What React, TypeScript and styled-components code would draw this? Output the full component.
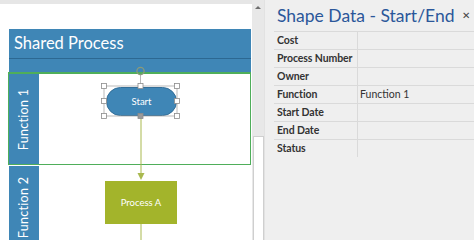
import { Fragment } from 'react'
import styled, { createGlobalStyle } from 'styled-components'

const GlobalStyle = createGlobalStyle`
  html, body {
    margin: 0;
    padding: 0;
    background: #ffffff;
    overflow: hidden;
  }
  body {
    font-family: Lato, 'Open Sans', sans-serif;
  }
`

const Window = styled.div`
  display: flex;
  width: 474px;
  height: 240px;
  overflow: hidden;
`

const Canvas = styled.div`
  width: 252px;
  flex-shrink: 0;
  display: flex;
  flex-direction: column;
  background: #ffffff;
  border-top: 4px solid #e6e6e6;
  box-sizing: border-box;
`

const Diagram = styled.div`
  position: relative;
  margin: 25px 1px 0 9px;
  display: flex;
  flex-direction: column;
`

const PoolTitle = styled.div`
  height: 29px;
  background: #3f86b6;
  color: #ffffff;
  font-size: 16.5px;
  line-height: 29px;
  padding-left: 5px;
  border-bottom: 1px solid #2c6892;
`

const PoolBand = styled.div`
  height: 13px;
  background: #3f86b6;
`

interface LaneProps {
  $height: number
  $selected?: boolean
}

const Lane = styled.div<LaneProps>`
  position: relative;
  display: flex;
  height: ${({ $height }) => $height}px;
  box-sizing: border-box;
  border: 1px solid ${({ $selected }) => ($selected ? '#4fae5a' : 'transparent')};
  border-top-width: ${({ $selected }) => ($selected ? '2px' : '1px')};
  margin-left: -1px;
`

const LaneLabel = styled.div`
  width: 30px;
  flex-shrink: 0;
  background: #3f86b6;
  color: #ffffff;
  display: flex;
  align-items: center;
  justify-content: center;
  overflow: hidden;
`

const LaneText = styled.span`
  display: block;
  transform: rotate(-90deg);
  white-space: nowrap;
  font-size: 12.5px;
  letter-spacing: 0.3px;
`

const LaneBody = styled.div`
  flex: 1;
`

interface ShapeProps {
  $x: number
  $y: number
  $w: number
  $h: number
}

const Terminator = styled.div<ShapeProps>`
  position: absolute;
  left: ${({ $x }) => $x}px;
  top: ${({ $y }) => $y}px;
  width: ${({ $w }) => $w}px;
  height: ${({ $h }) => $h}px;
  box-sizing: border-box;
  border-radius: 15px;
  background: #3f86b6;
  border: 1px solid #336f99;
  color: #ffffff;
  font-size: 9.5px;
  display: flex;
  align-items: center;
  justify-content: center;
  z-index: 2;
`

const ProcessBox = styled(Terminator)`
  border-radius: 0;
  background: #a3b42b;
  border-color: #a3b42b;
`

const Overlay = styled.svg`
  position: absolute;
  left: 0;
  top: 0;
  z-index: 3;
  pointer-events: none;
  overflow: visible;
`

const ScrollTrack = styled.div`
  width: 12px;
  flex-shrink: 0;
  background: #e8e8e8;
  display: flex;
  flex-direction: column;
  align-items: center;
`

const ScrollArrow = styled.div`
  margin-top: 6px;
  width: 0;
  height: 0;
  border-left: 3px solid transparent;
  border-right: 3px solid transparent;
  border-bottom: 3px solid #6e6e6e;
`

const ScrollThumb = styled.div`
  margin-top: 127px;
  width: 11px;
  flex: 1;
  box-sizing: border-box;
  background: #ffffff;
  border: 1px solid #cfcfcf;
  border-bottom: none;
`

const Panel = styled.div`
  flex: 1;
  min-width: 0;
  background: #efefef;
  border-left: 1px solid #e2e2e2;
  display: flex;
  flex-direction: column;
  padding-left: 9px;
`

const PanelHeader = styled.div`
  display: flex;
  align-items: center;
  justify-content: space-between;
  height: 31px;
  padding-left: 3px;
  padding-right: 4px;
`

const PanelTitle = styled.h1`
  margin: 0;
  font-size: 17.5px;
  font-weight: 400;
  color: #2b579a;
  white-space: nowrap;
`

const CloseButton = styled.span`
  font-size: 10px;
  color: #444444;
  margin-top: -2px;
`

const Table = styled.div`
  display: grid;
  grid-template-columns: 84px 1fr;
`

const Cell = styled.div`
  height: 18px;
  box-sizing: border-box;
  border-top: 1px solid #dadada;
  font-size: 10.5px;
  line-height: 17px;
  color: #333333;
  white-space: nowrap;
`

const LabelCell = styled(Cell)`
  font-weight: 700;
  padding-left: 3px;
  border-right: 1px solid #dadada;
  letter-spacing: -0.1px;
`

const ValueCell = styled(Cell)`
  padding-left: 2px;
`

const fields: [string, string][] = [
  ['Cost', ''],
  ['Process Number', ''],
  ['Owner', ''],
  ['Function', 'Function 1'],
  ['Start Date', ''],
  ['End Date', ''],
  ['Status', ''],
]

function Handle({ x, y, filled }: { x: number; y: number; filled?: boolean }) {
  return (
    <rect
      x={x - 2.5}
      y={y - 2.5}
      width={5}
      height={5}
      fill={filled ? '#9a9a9a' : '#ffffff'}
      stroke="#8c8c8c"
      strokeWidth={0.8}
    />
  )
}

export default function App() {
  // selection frame in diagram coords (origin = top-left of pool)
  const sx1 = 95
  const sx2 = 168
  const sy1 = 57
  const sy2 = 87
  const mx = (sx1 + sx2) / 2
  const my = (sy1 + sy2) / 2
  return (
    <>
      <GlobalStyle />
      <Window>
        <Canvas>
          <Diagram>
            <PoolTitle>Shared Process</PoolTitle>
            <PoolBand />
            <Lane $height={93} $selected>
              <LaneLabel>
                <LaneText>Function 1</LaneText>
              </LaneLabel>
              <LaneBody />
            </Lane>
            <Lane $height={84}>
              <LaneLabel>
                <LaneText>Function 2</LaneText>
              </LaneLabel>
              <LaneBody />
            </Lane>
            <Terminator $x={97} $y={58} $w={71} $h={29}>
              Start
            </Terminator>
            <ProcessBox $x={96} $y={152} $w={72} $h={43}>
              Process A
            </ProcessBox>
            <Overlay width={242} height={211}>
              <line x1={132} y1={87} x2={132} y2={145} stroke="#a9b94f" strokeWidth={1} />
              <polygon points="128.5,144 135.5,144 132,151" fill="#a9b94f" />
              <line x1={132} y1={195} x2={132} y2={215} stroke="#a9b94f" strokeWidth={1} />
              <rect x={sx1} y={sy1} width={sx2 - sx1} height={sy2 - sy1} fill="none" stroke="#9b9b9b" strokeWidth={0.7} />
              <line x1={mx} y1={46} x2={mx} y2={sy1} stroke="#9b9b9b" strokeWidth={0.7} />
              <circle cx={mx} cy={42} r={3.6} fill="none" stroke="#8a9a7a" strokeWidth={1.3} />
              <Handle x={sx1} y={sy1} />
              <Handle x={mx} y={sy1} />
              <Handle x={sx2} y={sy1} />
              <Handle x={sx1} y={my} />
              <Handle x={sx2} y={my} />
              <Handle x={sx1} y={sy2} />
              <Handle x={mx} y={sy2} filled />
              <Handle x={sx2} y={sy2} />
            </Overlay>
          </Diagram>
        </Canvas>
        <ScrollTrack>
          <ScrollArrow />
          <ScrollThumb />
        </ScrollTrack>
        <Panel>
          <PanelHeader>
            <PanelTitle>Shape Data - Start/End</PanelTitle>
            <CloseButton>✕</CloseButton>
          </PanelHeader>
          <Table>
            {fields.map(([label, value]) => (
              <Fragment key={label}>
                <LabelCell>{label}</LabelCell>
                <ValueCell>{value}</ValueCell>
              </Fragment>
            ))}
          </Table>
        </Panel>
      </Window>
    </>
  )
}
